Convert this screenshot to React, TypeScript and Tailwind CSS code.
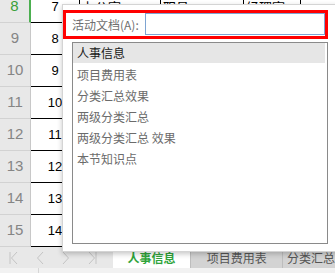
import React from 'react'

const rows = [
  { n: 8, v: '7', active: true },
  { n: 9, v: '8' },
  { n: 10, v: '9' },
  { n: 11, v: '10' },
  { n: 12, v: '11' },
  { n: 13, v: '12' },
  { n: 14, v: '13' },
  { n: 15, v: '14' },
]

const docs = ['人事信息', '项目费用表', '分类汇总效果', '两级分类汇总', '两级分类汇总 效果', '本节知识点']

function Chevron({ dir, bar }: { dir: 'l' | 'r'; bar?: boolean }) {
  return (
    <svg width="10" height="14" viewBox="0 0 10 14" fill="none" stroke="#c4c4c4" strokeWidth="1">
      {dir === 'l' ? <path d="M8 1L2.5 7L8 13" /> : <path d="M2 1L7.5 7L2 13" />}
      {bar && (dir === 'l' ? <path d="M1 1V13" /> : <path d="M9 1V13" />)}
    </svg>
  )
}

export default function App() {
  return (
    <div className="relative w-[335px] h-[274px] overflow-hidden bg-white font-['Noto_Sans_CJK_SC','Noto_Sans',sans-serif]">
      {/* sheet grid */}
      <div className="flex flex-col mt-[-9px]">
        {rows.map((r) => (
          <div key={r.n} className="flex h-[32px]">
            <div
              className={`w-[31px] flex items-center justify-center bg-[#e8e8e8] border-b border-[#d2d2d2] font-['Liberation_Sans',sans-serif] text-[15px] ${
                r.active ? 'text-[#3aa03a] border-r-2 border-r-[#4caf50]' : 'text-[#858585] border-r border-r-[#c8c8c8]'
              }`}
            >
              {r.n}
            </div>
            <div className="w-[49px] flex items-center justify-center border-b border-r border-black font-['Liberation_Sans',sans-serif] text-[13px] text-black">
              {r.v}
            </div>
            <div className="w-[81px] flex items-center px-[2px] border-b border-r border-black text-[13px] text-black">
              {r.active ? '办公室' : ''}
            </div>
            <div className="w-[83px] flex items-center px-[2px] border-b border-r border-black text-[13px] text-black">
              {r.active ? '职员' : ''}
            </div>
            <div className="w-[57px] flex items-center px-[2px] border-b border-r border-black text-[13px] text-black">
              {r.active ? '经理室' : ''}
            </div>
            <div className="flex-1 border-b border-black"></div>
          </div>
        ))}
      </div>

      {/* sheet tabs */}
      <div className="flex h-[21px] bg-[#e8e8e8]">
        <div className="w-[96px] flex items-center">
          <div className="ml-[9px] flex items-center gap-[16px]">
            <Chevron dir="l" bar />
            <Chevron dir="l" />
            <Chevron dir="r" />
            <Chevron dir="r" bar />
          </div>
          <div className="ml-auto w-px h-[13px] bg-[#cfcfcf]"></div>
        </div>
        <div className="w-[17px]"></div>
        <div className="w-[79px] bg-white flex items-center justify-center text-[12px] font-semibold text-[#2fa43a]">人事信息</div>
        <div className="w-[93px] bg-[#d3d3d3] border-l border-[#bdbdbd] flex items-center justify-center text-[12px] text-[#555]">项目费用表</div>
        <div className="flex-1 bg-[#d3d3d3] border-l border-[#bdbdbd] flex items-center pl-[4px] text-[12px] text-[#555] whitespace-nowrap">分类汇总</div>
      </div>
      <div className="flex h-[5px] bg-[#f2f2f2]">
        <div className="w-[39px] border-r border-[#d6d6d6]"></div>
      </div>

      {/* activate document popup */}
      <div className="absolute left-[62px] top-[4px] w-[280px] h-[248px] bg-white border border-[#d4d4d4] shadow-[0_2px_5px_rgba(0,0,0,0.22)]">
        <div className="mt-[5px] w-[265px] h-[29px] border-[3px] border-[#ff0000] flex items-start">
          <span className="pl-[6px] h-[23px] leading-[23px] text-[12px] text-[#6f6f6f] whitespace-nowrap">活动文档(A):</span>
          <div className="ml-auto w-[180px] h-[22px] border border-[#7ea4d2] bg-white"></div>
        </div>
        <div className="ml-[9px] mt-[3px] w-[256px] h-[202px] border border-[#8a8a8a] pr-[2px]">
          {docs.map((d, i) => (
            <div
              key={d}
              className={`pl-[4px] text-[12px] whitespace-pre ${
                i === 0 ? 'h-[20px] leading-[20px] mb-px bg-[#e6e6e6] text-[#1a1a1a]' : 'h-[21px] leading-[21px] text-[#6b6b6b]'
              }`}
            >
              {d}
            </div>
          ))}
        </div>
      </div>
    </div>
  )
}
